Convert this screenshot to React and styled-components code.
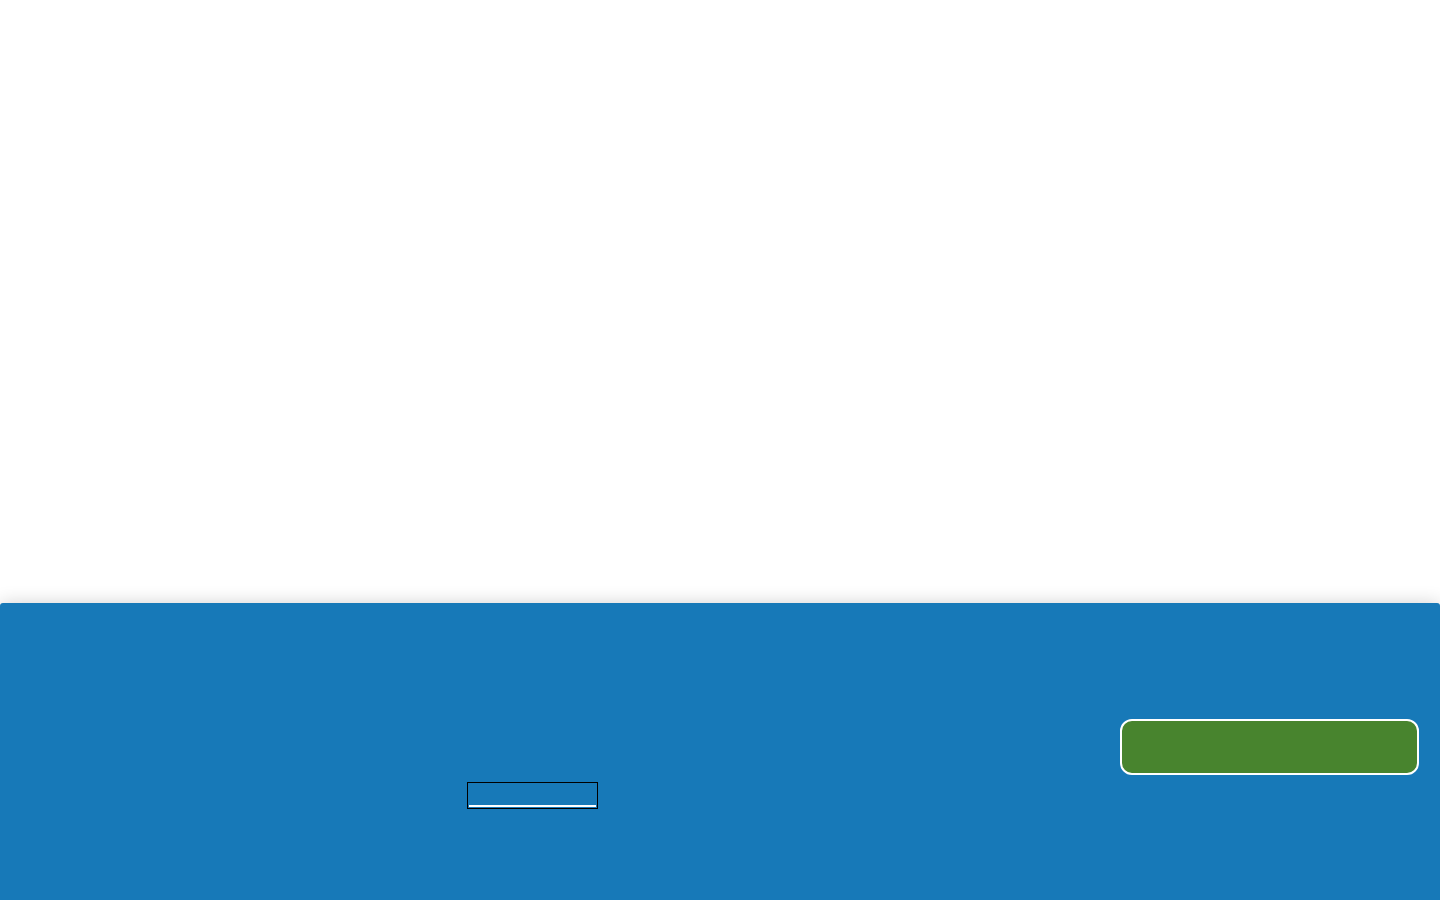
import React from "react";
import styled, { createGlobalStyle } from "styled-components";

const Global = createGlobalStyle`
  html, body { margin: 0; padding: 0; background: #ffffff; }
  body { font-family: "Liberation Sans", Arial, sans-serif; }
`;

const Page = styled.div`
  min-height: 100vh;
  background: #ffffff;
`;

const Banner = styled.section`
  position: fixed;
  left: 0;
  right: 0;
  bottom: 0;
  height: 297px;
  box-sizing: border-box;
  padding: 0 21px 10px 0;
  background: #1779b8;
  border-radius: 3px 3px 0 0;
  box-shadow: 0 0 18px rgba(0, 0, 0, 0.18);
  display: grid;
  grid-template-columns: 1fr auto;
  align-items: center;
`;

const Message = styled.div`
  display: flex;
  flex-direction: column;
  align-items: flex-start;
  padding-left: 469px;
  padding-top: 98px;
`;

const PolicyLink = styled.a`
  display: inline-block;
  width: 127px;
  height: 21px;
  border-bottom: 2px solid #ffffff;
  outline: 1px solid #000000;
  outline-offset: 1px;
  color: #1779b8;
  text-decoration: none;
  font-size: 14px;
  line-height: 21px;
`;

const AcceptButton = styled.button`
  width: 299px;
  height: 56px;
  box-sizing: border-box;
  border: 2px solid #ffffff;
  border-radius: 12px;
  background: #48842e;
  color: #48842e;
  font-family: "Liberation Sans", Arial, sans-serif;
  font-size: 16px;
  cursor: pointer;
`;

export default function App() {
  return (
    <Page>
      <Global />
      <Banner aria-label="Cookie consent">
        <Message>
          <PolicyLink href="#" aria-label="Cookie policy"></PolicyLink>
        </Message>
        <AcceptButton aria-label="Accept cookies"></AcceptButton>
      </Banner>
    </Page>
  );
}
